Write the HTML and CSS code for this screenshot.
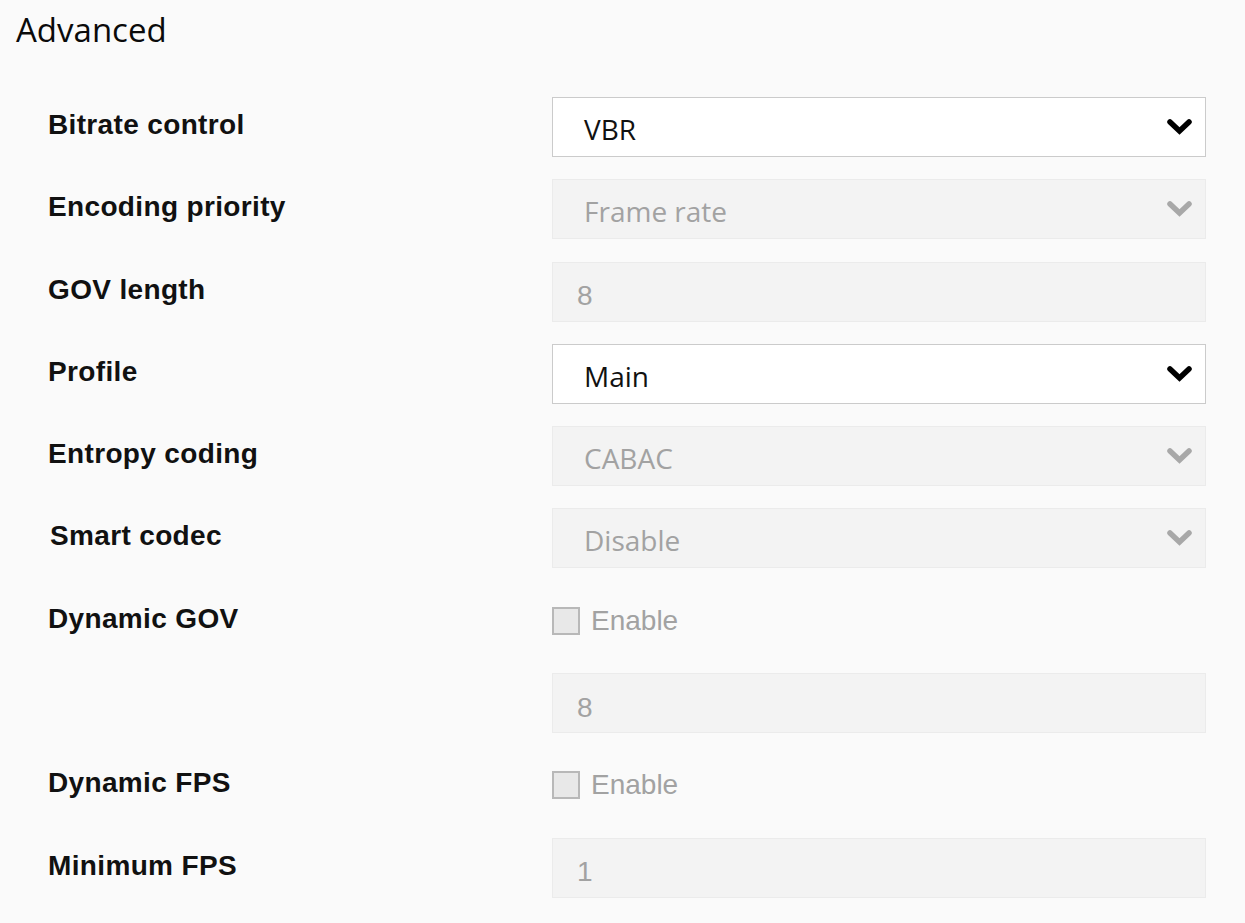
FILE: index.html
```html
<!DOCTYPE html>
<html>
  <head>
    <title>Advanced</title>
    <link rel="stylesheet" href="styles.css">
  </head>
  <body>
    <div class="panel">
      <h2 class="title">Advanced</h2>
      <div class="form">
        <div class="row">
          <label>Bitrate control</label>
          <div class="select">
            <span>VBR</span>
            <svg class="chev" viewBox="0 0 25 16"><polyline points="3,3 12.5,12 22,3"/></svg>
          </div>
        </div>
        <div class="row">
          <label>Encoding priority</label>
          <div class="select disabled">
            <span>Frame rate</span>
            <svg class="chev" viewBox="0 0 25 16"><polyline points="3,3 12.5,12 22,3"/></svg>
          </div>
        </div>
        <div class="row">
          <label>GOV length</label>
          <div class="input disabled">8</div>
        </div>
        <div class="row">
          <label>Profile</label>
          <div class="select">
            <span>Main</span>
            <svg class="chev" viewBox="0 0 25 16"><polyline points="3,3 12.5,12 22,3"/></svg>
          </div>
        </div>
        <div class="row">
          <label>Entropy coding</label>
          <div class="select disabled">
            <span>CABAC</span>
            <svg class="chev" viewBox="0 0 25 16"><polyline points="3,3 12.5,12 22,3"/></svg>
          </div>
        </div>
        <div class="row">
          <label class="nudge">Smart codec</label>
          <div class="select disabled">
            <span>Disable</span>
            <svg class="chev" viewBox="0 0 25 16"><polyline points="3,3 12.5,12 22,3"/></svg>
          </div>
        </div>
        <div class="row">
          <label>Dynamic GOV</label>
          <div class="check">
            <span class="box"></span>
            <span>Enable</span>
          </div>
        </div>
        <div class="row">
          <label></label>
          <div class="input disabled">8</div>
        </div>
        <div class="row">
          <label>Dynamic FPS</label>
          <div class="check">
            <span class="box"></span>
            <span>Enable</span>
          </div>
        </div>
        <div class="row">
          <label>Minimum FPS</label>
          <div class="input disabled">1</div>
        </div>
      </div>
    </div>
  </body>
</html>
```

FILE: styles.css
```css
* {
    margin: 0;
    box-sizing: border-box;
}
html, body {
    background: #fafafa;
}
body {
    font-family: "Liberation Sans", Arial, sans-serif;
    color: #111;
}
.panel {
    padding: 7px 39px 0 16px;
}
.title {
    font: 400 33px/45px "Open Sans", sans-serif;
    color: #0a0a0a;
}
.form {
    margin: 45px 0 0 32px;
    display: flex;
    flex-direction: column;
    gap: 22.3px;
}
.row {
    display: grid;
    grid-template-columns: 504px 654px;
    height: 60px;
}
.row label {
    font: bold 28px/32px "Liberation Sans", Arial, sans-serif;
    letter-spacing: 0.35px;
    padding-top: 12px;
    color: #111;
}
.row label.nudge {
    padding-left: 2px;
}
.select, .input {
    height: 60px;
    display: flex;
    align-items: center;
    border: 1px solid #cbcbcb;
    background: #fff;
}
.select {
    justify-content: space-between;
    padding: 4px 13px 0 31px;
    font: 28px "Open Sans", sans-serif;
    color: #111;
}
.input {
    padding: 9px 0 0 24px;
    font: 28px "Liberation Sans", Arial, sans-serif;
}
.disabled {
    background: #f3f3f3;
    border-color: #ebebeb;
    color: #a2a2a2;
}
.chev {
    width: 25px;
    height: 16px;
    margin-top: -4px;
}
.chev polyline {
    fill: none;
    stroke: #000;
    stroke-width: 5.5;
    stroke-linecap: round;
    stroke-linejoin: miter;
}
.disabled .chev polyline {
    stroke: #a8a8a8;
}
.check {
    display: flex;
    align-items: center;
    align-self: start;
    gap: 11px;
    padding-top: 14px;
    font: 28px "Liberation Sans", Arial, sans-serif;
    color: #a2a2a2;
}
.check .box {
    width: 28px;
    height: 28px;
    border: 2px solid #b8b8b8;
    background: #e8e8e8;
}
```
